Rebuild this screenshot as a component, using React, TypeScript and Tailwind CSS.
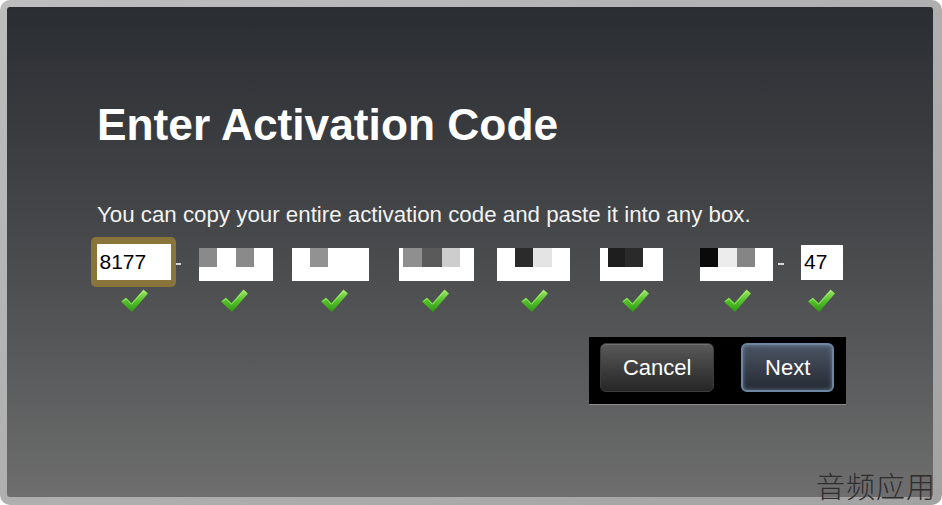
import React from "react";

type Block = { w: number; c: string };
type CodeBox = { ml: number; w: number; blocks: Block[]; pl: number };

const boxes: CodeBox[] = [
  { ml: 18, w: 74, pl: 0, blocks: [{ w: 18, c: "#8a8a8a" }, { w: 19, c: "#ffffff" }, { w: 18, c: "#8a8a8a" }] },
  { ml: 19, w: 77, pl: 18, blocks: [{ w: 18, c: "#929292" }] },
  { ml: 30, w: 75, pl: 4, blocks: [{ w: 19, c: "#8f8f8f" }, { w: 20, c: "#5a5a5a" }, { w: 18, c: "#cdcdcd" }] },
  { ml: 23, w: 73, pl: 18, blocks: [{ w: 18, c: "#2b2b2b" }, { w: 19, c: "#e4e4e4" }] },
  { ml: 30, w: 63, pl: 8, blocks: [{ w: 17, c: "#1e1e1e" }, { w: 18, c: "#2a2a2a" }] },
  { ml: 37, w: 73, pl: 0, blocks: [{ w: 18, c: "#0a0a0a" }, { w: 19, c: "#ececec" }, { w: 18, c: "#858585" }] },
];

const checkGaps = [30, 73, 73, 74, 72, 74, 75, 57];

const Check = ({ ml }: { ml: number }) => (
  <svg width="27" height="23" viewBox="0 0 27 23" style={{ marginLeft: ml }}>
    <defs>
      <linearGradient id={`g${ml}`} x1="0" y1="0" x2="0" y2="1">
        <stop offset="0" stopColor="#9be866" />
        <stop offset="0.5" stopColor="#55c22a" />
        <stop offset="1" stopColor="#2c9a10" />
      </linearGradient>
    </defs>
    <path d="M0 12.5 L5 8.5 L10.5 14 L22.5 0.5 L27 4.5 L11 23 Z" fill={`url(#g${ml})`} />
    <path d="M1.5 12.3 L5 9.8 L10.5 15.3 L22.6 2 L25 4.2" fill="none" stroke="#b9f28f" strokeWidth="1" opacity="0.7" />
  </svg>
);

const App = () => {
  return (
    <div className="h-[505px] w-[942px] bg-white" style={{ fontFamily: '"Liberation Sans", Arial, sans-serif' }}>
      <div className="relative h-full w-full rounded-[10px] bg-gradient-to-br from-[#bdbdbd] to-[#a2a2a2] p-[7px] pb-[8px] pr-[9px]">
        <div className="flex h-full flex-col rounded-[3px] bg-gradient-to-b from-[#2a2d32] via-[#484a4c] to-[#6e6e6e] pl-[90px] pr-[87px] pt-[96px]">
          <h1 className="text-[44.3px] font-bold leading-none text-white">Enter Activation Code</h1>
          <p className="mt-[57px] text-[22.3px] leading-none text-[#f2f2f2]">
            You can copy your entire activation code and paste it into any box.
          </p>

          {/* code boxes */}
          <div className="ml-[-6px] mt-[10px] flex h-[50px] items-start">
            <div className="flex h-[50px] w-[85px] items-center justify-center rounded-[5px] bg-[#89743a]">
              <div className="flex h-[36px] w-[74px] items-center bg-white pl-[3px] text-[21px] text-black">8177</div>
            </div>
            <div className="mt-[26px] h-[2px] w-[5px] bg-[#d6d6d6]" />
            {boxes.map((b, i) => (
              <div
                key={i}
                className="mt-[11px] flex h-[33px] flex-col bg-white"
                style={{ marginLeft: b.ml, width: b.w, paddingLeft: b.pl }}
              >
                <div className="flex h-[19px]">
                  {b.blocks.map((blk, j) => (
                    <div key={j} style={{ width: blk.w, backgroundColor: blk.c }} />
                  ))}
                </div>
              </div>
            ))}
            <div className="ml-[5px] mt-[26px] h-[2px] w-[6px] bg-[#d6d6d6]" />
            <div className="ml-[17px] mt-[8px] flex h-[35px] w-[42px] items-center bg-white pl-[3px] text-[21px] text-black">47</div>
          </div>

          {/* checkmarks */}
          <div className="ml-[-6px] mt-[2px] flex">
            {checkGaps.map((g, i) => (
              <Check key={i} ml={g} />
            ))}
          </div>

          {/* buttons */}
          <div className="mt-[25px] flex justify-end">
            <div className="flex h-[68px] w-[257px] gap-[27px] border-b border-[#8c8c8c] bg-black pb-[13px] pl-[11px] pr-[12px] pt-[6px]">
              <button className="h-[49px] w-[115px] rounded-[6px] border border-[#3c3c3c] bg-gradient-to-b from-[#5a5a5a] to-[#262626] text-[22px] text-white shadow-[inset_0_1px_0_rgba(255,255,255,0.15)]">
                Cancel
              </button>
              <button className="h-[49px] w-[93px] rounded-[6px] border-2 border-[#6d86a2] bg-gradient-to-b from-[#4c5566] to-[#262b33] text-[22px] text-white shadow-[inset_0_0_4px_rgba(140,170,205,0.6)]">
                Next
              </button>
            </div>
          </div>
        </div>

        {/* watermark */}
        <div
          className="absolute bottom-[5px] right-[6px] text-[29px] font-light leading-none tracking-[1px] text-[#2e2e2e]"
          style={{ fontFamily: '"Noto Sans CJK SC", sans-serif' }}
        >
          音频应用
        </div>
      </div>
    </div>
  );
};

export default App;
